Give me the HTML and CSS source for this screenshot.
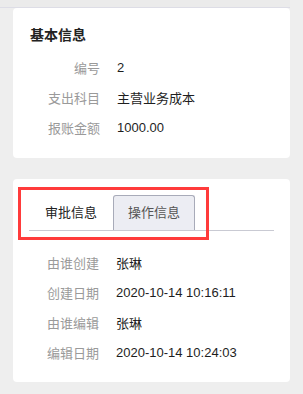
FILE: index.html
```html
<!DOCTYPE html>
<html lang="zh">
<head>
<meta charset="utf-8">
<link rel="stylesheet" href="styles.css">
</head>
<body>
<div class="topbar"></div>
<div class="page">
  <section class="card card-basic">
    <h2 class="title">基本信息</h2>
    <div class="rows">
      <div class="row"><span class="label">编号</span><span class="value">2</span></div>
      <div class="row"><span class="label">支出科目</span><span class="value">主营业务成本</span></div>
      <div class="row"><span class="label">报账金额</span><span class="value">1000.00</span></div>
    </div>
  </section>
  <section class="card card-tabs">
    <div class="tabs">
      <div class="tab">审批信息</div>
      <div class="tab active">操作信息</div>
    </div>
    <div class="highlight"></div>
    <div class="rows rows-op">
      <div class="row"><span class="label">由谁创建</span><span class="value">张琳</span></div>
      <div class="row"><span class="label">创建日期</span><span class="value">2020-10-14 10:16:11</span></div>
      <div class="row"><span class="label">由谁编辑</span><span class="value">张琳</span></div>
      <div class="row"><span class="label">编辑日期</span><span class="value">2020-10-14 10:24:03</span></div>
    </div>
  </section>
</div>
</body>
</html>
```
FILE: styles.css
```css
* { box-sizing: border-box; }
html, body {
  margin: 0;
  padding: 0;
  background: #eeeeee;
  font-family: "Liberation Sans", "Noto Sans CJK SC", sans-serif;
  font-size: 13px;
  color: #333;
}
.topbar {
  width: 290px;
  height: 8px;
  background: #ebebeb;
  border-bottom: 1px solid #dddde6;
}
.page {
  padding: 0 13px;
  display: flex;
  flex-direction: column;
  gap: 21px;
}
.card {
  background: #fff;
  border-radius: 4px;
  padding: 17px 17px 16px;
  position: relative;
}
.title {
  margin: 0;
  font-size: 14px;
  font-weight: bold;
  line-height: 20px;
  color: #222;
}
.rows {
  margin-top: 7px;
  display: flex;
  flex-direction: column;
}
.row {
  display: flex;
  align-items: center;
  height: 30px;
  gap: 17px;
}
.label {
  width: 70px;
  text-align: right;
  color: #9a9a9a;
}
.value { color: #1e1e1e; }
.card-tabs {
  padding: 16px 16px 15px 16px;
}
.tabs {
  display: flex;
  border-bottom: 1px solid #c9cad3;
  height: 36px;
}
.tab {
  padding: 0 15px;
  border: 1px solid transparent;
  border-bottom: none;
  border-radius: 3px 3px 0 0;
  line-height: 34px;
  color: #222;
  font-size: 13px;
}
.tab.active {
  padding: 0 14px;
  background: #ecedf3;
  border-color: #a8abb9;
  color: #555;
}
.highlight {
  position: absolute;
  left: 5px;
  top: 8px;
  width: 191px;
  height: 53px;
  border: 3px solid #ff3b3b;
}
.rows-op { margin-top: 16px; }
```
